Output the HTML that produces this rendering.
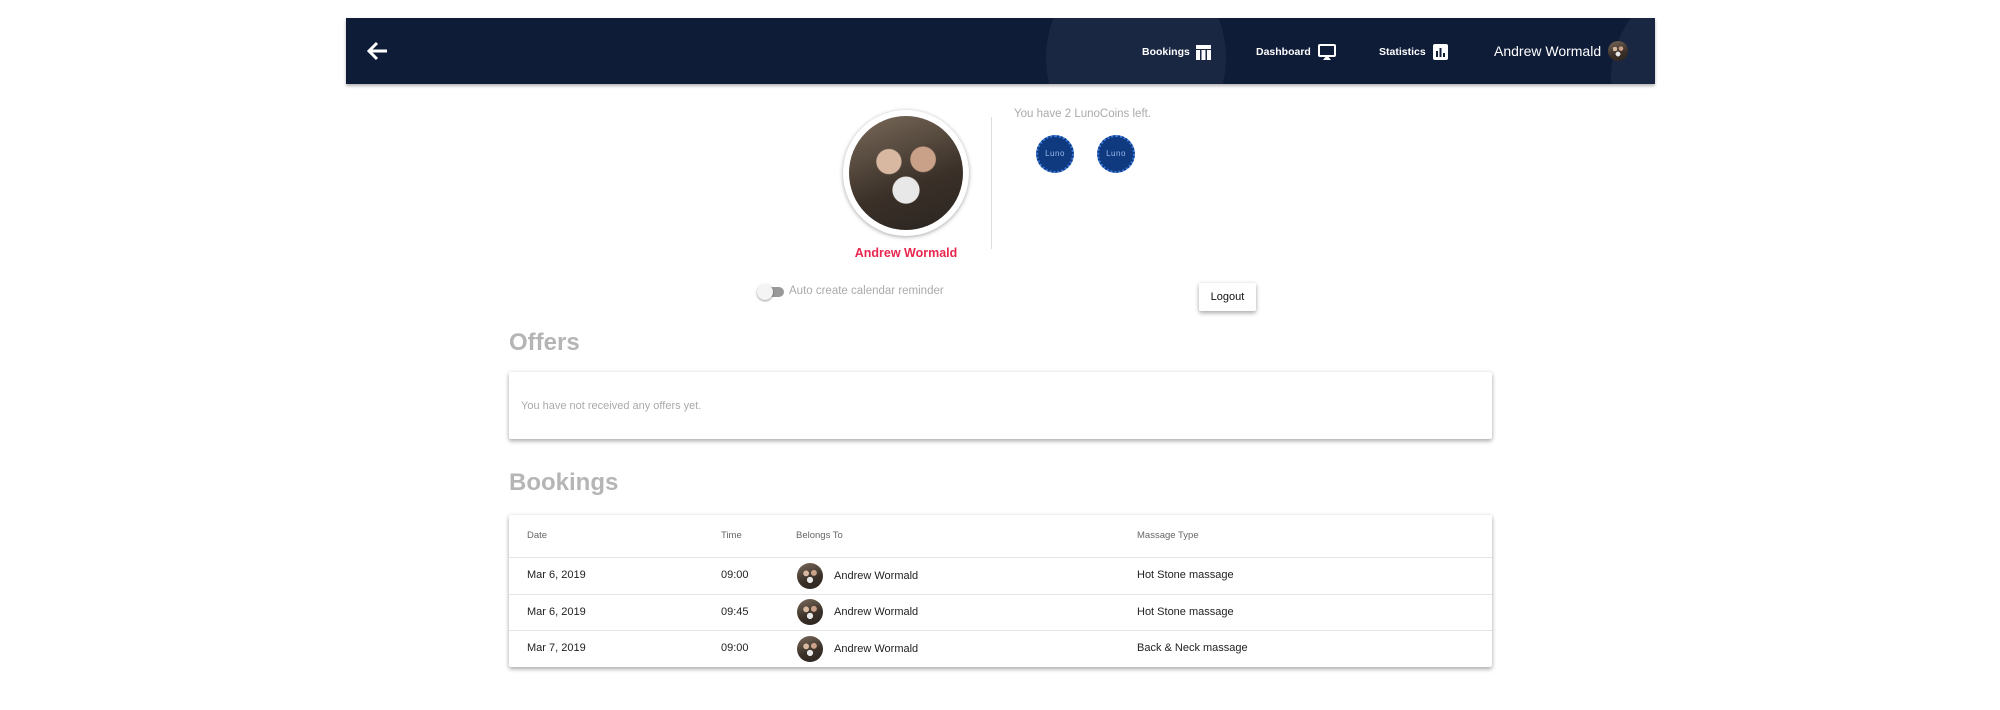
<!DOCTYPE html>
<html><head><meta charset="utf-8"><style>
*{margin:0;padding:0;box-sizing:border-box}
body{width:2000px;height:710px;background:#fff;font-family:"Liberation Sans",sans-serif;position:relative;overflow:hidden}
.a{position:absolute}
.hdr{left:346px;top:18px;width:1309px;height:66px;background:#0f1c38;overflow:hidden;box-shadow:0 2px 3px rgba(0,0,0,.3)}
.nav{color:#fff;font-size:10.5px;font-weight:bold;top:46px}
.photo{border-radius:50%;background:radial-gradient(circle at 35% 40%,#d8b8a0 0 12%,transparent 13%),radial-gradient(circle at 65% 38%,#c9a088 0 12%,transparent 13%),radial-gradient(circle at 50% 65%,#e8e8e8 0 14%,transparent 15%),linear-gradient(160deg,#7a6a5a,#3a3028 60%,#2a2420)}
.coin{width:38px;height:38px;border-radius:50%;background:#0f3a80;border:2px dotted #3a7ae0;color:#9ab8e8;font-size:8px;text-align:center;line-height:34px;top:135px;letter-spacing:.5px}
.card{background:#fff;box-shadow:0 1px 4px rgba(0,0,0,.25),0 3px 4px rgba(0,0,0,.15);border-radius:2px}
.h2{color:#b5b5b5;font-weight:bold;font-size:24px}
.td{font-size:11px;color:#222}
.th{font-size:9.5px;color:#666}
.line{left:509px;width:983px;height:1px;background:#e4e4e4}
.av{width:26px;height:26px}
</style></head><body>
<div class="a hdr">
 <div class="a" style="left:700px;top:-60px;width:180px;height:200px;border-radius:50%;background:#1a2742"></div>
 <div class="a" style="left:1265px;top:-40px;width:200px;height:200px;border-radius:50%;background:#1a2742"></div>
</div>
<svg class="a" style="left:367px;top:41px" width="22" height="20" viewBox="0 0 22 20"><path d="M20 10H3M10 2L2 10l8 8" stroke="#fff" stroke-width="3" fill="none"/></svg>
<div class="a nav" style="left:1142px">Bookings</div>
<svg class="a" style="left:1196px;top:45px" width="15" height="15"><rect x="0" y="0" width="15" height="4" fill="#fff"/><rect x="0" y="5" width="4" height="10" fill="#fff"/><rect x="5.5" y="5" width="4" height="10" fill="#fff"/><rect x="11" y="5" width="4" height="10" fill="#fff"/></svg>
<div class="a nav" style="left:1256px">Dashboard</div>
<svg class="a" style="left:1318px;top:44px" width="18" height="17"><rect x="1" y="1" width="16" height="11" rx="1" fill="none" stroke="#fff" stroke-width="2"/><path d="M5 16h8l-4-5z" fill="#fff"/></svg>
<div class="a nav" style="left:1379px">Statistics</div>
<svg class="a" style="left:1433px;top:44px" width="15" height="16"><rect width="15" height="16" rx="2" fill="#fff"/><rect x="3" y="7" width="2" height="6" fill="#0f1c38"/><rect x="6.5" y="4" width="2" height="9" fill="#0f1c38"/><rect x="10" y="9" width="2" height="4" fill="#0f1c38"/></svg>
<div class="a" style="left:1494px;top:43px;color:#fff;font-size:14px">Andrew Wormald</div>
<div class="a photo" style="left:1608px;top:41px;width:20px;height:20px"></div>

<div class="a" style="left:843px;top:110px;width:126px;height:126px;border-radius:50%;background:#fff;box-shadow:0 1px 4px rgba(0,0,0,.35)"></div>
<div class="a photo" style="left:849px;top:116px;width:114px;height:114px"></div>
<div class="a" style="left:806px;top:246px;width:200px;text-align:center;color:#e8264f;font-weight:bold;font-size:12.5px">Andrew Wormald</div>
<div class="a" style="left:991px;top:117px;width:1px;height:132px;background:#ddd"></div>
<div class="a" style="left:1014px;top:108px;color:#aaa;font-size:11.5px">You have 2 LunoCoins left.</div>
<div class="a coin" style="left:1036px">Luno</div>
<div class="a coin" style="left:1097px">Luno</div>

<div class="a" style="left:760px;top:287px;width:24px;height:10px;border-radius:5px;background:#999"></div>
<div class="a" style="left:757px;top:284px;width:16px;height:16px;border-radius:50%;background:#f4f4f4;box-shadow:0 1px 2px rgba(0,0,0,.4)"></div>
<div class="a" style="left:789px;top:285px;color:#aaa;font-size:11.5px">Auto create calendar reminder</div>
<div class="a card" style="left:1199px;top:283px;width:57px;height:28px;font-size:11px;text-align:center;line-height:28px;color:#111">Logout</div>

<div class="a h2" style="left:509px;top:329px">Offers</div>
<div class="a card" style="left:509px;top:372px;width:983px;height:67px"></div>
<div class="a" style="left:521px;top:400px;color:#aaa;font-size:11px">You have not received any offers yet.</div>

<div class="a h2" style="left:509px;top:469px">Bookings</div>
<div class="a card" style="left:509px;top:515px;width:983px;height:152px"></div>
<div class="a th" style="left:527px;top:530px">Date</div>
<div class="a th" style="left:721px;top:530px">Time</div>
<div class="a th" style="left:796px;top:530px">Belongs To</div>
<div class="a th" style="left:1137px;top:530px">Massage Type</div>
<div class="a line" style="top:557px"></div>
<div class="a line" style="top:594px"></div>
<div class="a line" style="top:630px"></div>

<div class="a td" style="left:527px;top:569px">Mar 6, 2019</div>
<div class="a td" style="left:721px;top:569px">09:00</div>
<div class="a photo av" style="left:797px;top:563px"></div>
<div class="a td" style="left:834px;top:570px">Andrew Wormald</div>
<div class="a td" style="left:1137px;top:569px">Hot Stone massage</div>

<div class="a td" style="left:527px;top:606px">Mar 6, 2019</div>
<div class="a td" style="left:721px;top:606px">09:45</div>
<div class="a photo av" style="left:797px;top:599px"></div>
<div class="a td" style="left:834px;top:606px">Andrew Wormald</div>
<div class="a td" style="left:1137px;top:606px">Hot Stone massage</div>

<div class="a td" style="left:527px;top:642px">Mar 7, 2019</div>
<div class="a td" style="left:721px;top:642px">09:00</div>
<div class="a photo av" style="left:797px;top:636px"></div>
<div class="a td" style="left:834px;top:643px">Andrew Wormald</div>
<div class="a td" style="left:1137px;top:642px">Back &amp; Neck massage</div>
</body></html>
